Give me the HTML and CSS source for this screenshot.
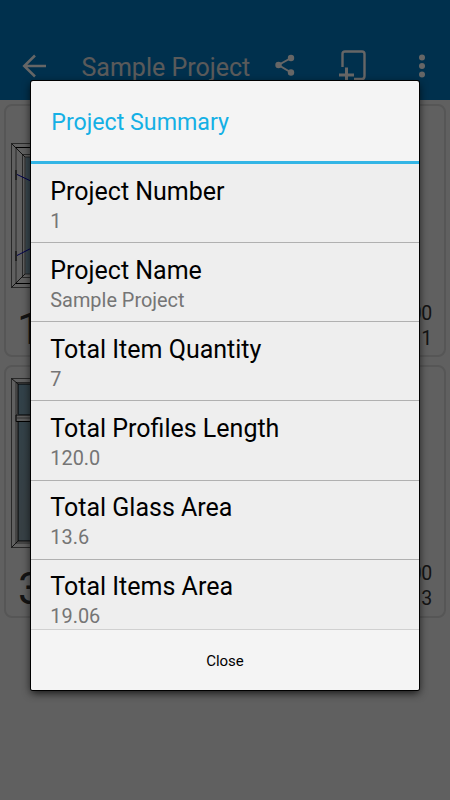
FILE: index.html
```html
<!DOCTYPE html>
<html lang="en">

<head>
  <meta charset="UTF-8">
  <meta name="viewport" content="width=device-width, initial-scale=1.0">
  <title>Sample Project</title>
  <link rel="stylesheet" href="styles.css">
</head>

<body>
  <header class="toolbar">
    <svg class="back" width="24" height="24" viewBox="0 0 24 24" fill="none" stroke="#fff" stroke-width="2.5">
      <path d="M24 12H2M13 1.500L2.200 12L13 22.500" />
    </svg>
    <h1>Sample Project</h1>
    <svg class="share" width="20" height="22" viewBox="0 0 20 22" fill="#fff">
      <path d="M16 4L3.500 11L16 18.500" fill="none" stroke="#fff" stroke-width="2" />
      <circle cx="16" cy="4" r="3.2" />
      <circle cx="3.500" cy="11" r="3.2" />
      <circle cx="16" cy="18.500" r="3.2" />
    </svg>
    <svg class="add" width="28" height="34" viewBox="0 0 28 34" fill="none" stroke="#fff">
      <path d="M3.500 18V5Q3.500 2.500 6 2.500H23Q25.500 2.500 25.500 5V27Q25.500 30 23 30H15" stroke-width="2.4" />
      <path d="M0 26H15M7.500 18.500V33" stroke-width="3" />
    </svg>
    <svg class="more" width="8" height="24" viewBox="0 0 8 24" fill="#fff">
      <circle cx="4" cy="3.500" r="3" />
      <circle cx="4" cy="12" r="3" />
      <circle cx="4" cy="20.500" r="3" />
    </svg>
  </header>

  <main class="items">
    <section class="item first">
      <svg class="window" width="60" height="146" viewBox="0 0 60 146" fill="none" stroke="#000">
        <rect x="14.500" y="14" width="60" height="117" fill="#8fb2c4" stroke="none" />
        <path d="M60 .5H.5V144.500H60M5 4.500V140.500M60 11.500H11.500V134.500H60M60 14H14V131H60" stroke-width=".8" stroke="#444" />
        <path d="M5 4.500H60M5 140.500H60" />
        <path d="M.5 .5L14 14M.5 144.500L14 131" stroke-width=".8" />
        <path d="M5 31L60 57M5 113L60 85" stroke="#00b" />
        <path d="M5 27V37M5 108V118" stroke="#555" stroke-width="2" />
      </svg>
      <div class="item-row">
        <span class="number">1</span>
        <div class="values"><span>100.00</span><span>1</span></div>
      </div>
    </section>
    <section class="item second">
      <svg class="window" width="60" height="170" viewBox="0 0 60 170" fill="none" stroke="#000">
        <defs>
          <linearGradient id="glass" x1="0" y1="0" x2="1" y2="1">
            <stop offset="0" stop-color="#7ba4b8" />
            <stop offset=".5" stop-color="#8ba0ab" />
            <stop offset="1" stop-color="#84b4c9" />
          </linearGradient>
        </defs>
        <path d="M7 6H60V163H7Z" fill="url(#glass)" stroke="none" />
        <path d="M5 37H60V43.500H5Z" fill="#e6e6e6" />
        <path d="M5 40H60" stroke="#777" />
        <path d="M60 .5H.5V169.500H60M60 4.500H5V165H60" stroke-width=".8" stroke="#444" />
        <path d="M60 6H7V36M7 44V163H60" />
        <path d="M.5 .5L7 6M.5 169.500L7 163" stroke-width=".8" />
      </svg>
      <div class="item-row">
        <span class="number">3</span>
        <div class="values"><span>100.00</span><span>3</span></div>
      </div>
    </section>
  </main>

  <div class="overlay">
    <div class="dialog">
      <h2>Project Summary</h2>
      <dl class="list">
        <div class="entry"><dt>Project Number</dt><dd>1</dd></div>
        <div class="entry"><dt>Project Name</dt><dd>Sample Project</dd></div>
        <div class="entry"><dt>Total Item Quantity</dt><dd>7</dd></div>
        <div class="entry"><dt>Total Profiles Length</dt><dd>120.0</dd></div>
        <div class="entry"><dt>Total Glass Area</dt><dd>13.6</dd></div>
        <div class="entry"><dt>Total Items Area</dt><dd>19.06</dd></div>
      </dl>
      <button class="close">Close</button>
    </div>
  </div>
</body>

</html>
```
FILE: styles.css
```css
* {
  box-sizing: border-box;
}

body {
  margin: 0;
  height: 800px;
  overflow: hidden;
  background: #f0f0f0;
  font-family: Roboto, "Liberation Sans", sans-serif;
}

.toolbar {
  height: 100px;
  padding: 49px 24px 0 22px;
  display: flex;
  align-items: flex-start;
  background: #0078c0;
  color: #e0e0e0;
}

.toolbar h1 {
  margin: 4px 0 0 35.500px;
  width: 169.500px;
  font-size: 25px;
  line-height: 30px;
  font-weight: 400;
  white-space: nowrap;
}

.back {
  margin-top: 5px;
}

.share {
  margin: 5px 0 0 24px;
}

.add {
  margin-left: 44px;
}

.more {
  margin: 5px 0 0 auto;
}

.items {
  padding: 4px 4px 0;
}

.item {
  height: 253px;
  margin-bottom: 8px;
  padding: 37px 8px 0 5px;
  border: 2px solid #d6d6d6;
  border-radius: 8px;
}

.item.second {
  padding-top: 11px;
}

.window {
  display: block;
}

.item-row {
  display: flex;
  justify-content: space-between;
  margin-top: 10px;
  padding-left: 7px;
  color: #333;
}

.first .item-row {
  padding-left: 6px;
}

.second .item-row {
  margin-top: 11px;
}

.number {
  font-size: 44px;
  line-height: 60px;
}

.values {
  padding: 2px 4px 0 0;
  display: flex;
  flex-direction: column;
  text-align: right;
  font-size: 19.500px;
  letter-spacing: -.3px;
  line-height: 25px;
}

.overlay {
  position: absolute;
  top: 0;
  left: 0;
  width: 450px;
  height: 800px;
  padding: 81px 31px 0;
  background: rgba(0, 0, 0, .6);
}

.dialog {
  height: 609px;
  display: flex;
  flex-direction: column;
  overflow: hidden;
  border-radius: 2px;
  background: #f4f4f4;
  box-shadow: 0 0 0 1px #000, 0 3px 8px rgba(0, 0, 0, .8);
}

.dialog h2 {
  flex: none;
  height: 83px;
  margin: 0;
  padding: 0 20.300px;
  border-bottom: 3px solid #33b5e5;
  color: #14b0e5;
  font-size: 23.200px;
  line-height: 83px;
  font-weight: 400;
}

.list {
  height: 465px;
  margin: 0;
  overflow: hidden;
  background: #eee;
}

.entry {
  height: 79.150px;
  padding: 11.700px 19.300px 0;
  border-bottom: 1px solid #b0b0b0;
}

.entry dt {
  color: #000;
  font-size: 25px;
  line-height: 32px;
}

.entry dd {
  margin: 0;
  color: #757575;
  font-size: 19.900px;
  line-height: 28px;
}

.close {
  flex: 1;
  padding-top: 3px;
  border: 0;
  border-top: 1px solid #d0d0d0;
  background: #f4f4f4;
  color: #000;
  font-family: inherit;
  font-size: 15px;
}
```
